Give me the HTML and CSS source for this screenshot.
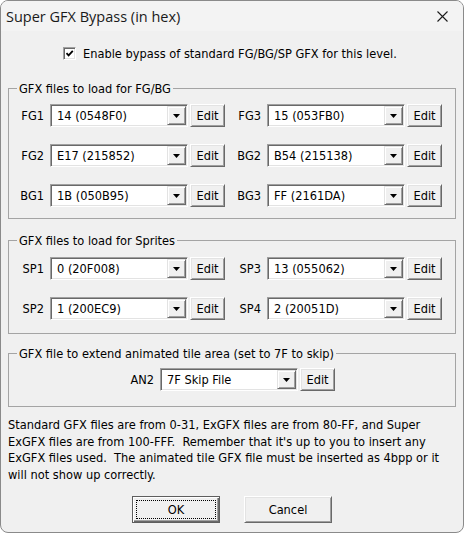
FILE: index.html
```html
<!DOCTYPE html>
<html>
<head>
<meta charset="utf-8">
<title>Super GFX Bypass (in hex)</title>
<link rel="stylesheet" href="styles.css">
</head>
<body>
<div class="window">
  <div class="titlebar">
    <span class="title">Super GFX Bypass (in hex)</span>
    <svg class="close" width="11" height="11" viewBox="0 0 11 11"><path d="M0.5 0.5L10.5 10.5M10.5 0.5L0.5 10.5" stroke="#1b1b1b" stroke-width="1.1" fill="none"/></svg>
  </div>
  <div class="content">
    <label class="enable">
      <span class="checkbox"><svg width="9" height="9" viewBox="0 0 9 9"><path d="M1.5 4.2L3.6 6.4L7.8 1.8" stroke="#000" stroke-width="1.8" fill="none"/></svg></span>
      <span>Enable bypass of standard FG/BG/SP GFX for this level.</span>
    </label>

    <fieldset class="group g1">
      <legend>GFX files to load for FG/BG</legend>
      <div class="grid">
        <div class="field"><span class="lbl">FG1</span><div class="combo"><span class="value">14 (0548F0)</span><span class="drop"><svg width="7" height="4" viewBox="0 0 7 4"><path d="M0 0H7L3.5 4Z" fill="#000"/></svg></span></div><button class="edit">Edit</button></div>
        <div class="field"><span class="lbl">FG3</span><div class="combo"><span class="value">15 (053FB0)</span><span class="drop"><svg width="7" height="4" viewBox="0 0 7 4"><path d="M0 0H7L3.5 4Z" fill="#000"/></svg></span></div><button class="edit">Edit</button></div>
        <div class="field"><span class="lbl">FG2</span><div class="combo"><span class="value">E17 (215852)</span><span class="drop"><svg width="7" height="4" viewBox="0 0 7 4"><path d="M0 0H7L3.5 4Z" fill="#000"/></svg></span></div><button class="edit">Edit</button></div>
        <div class="field"><span class="lbl">BG2</span><div class="combo"><span class="value">B54 (215138)</span><span class="drop"><svg width="7" height="4" viewBox="0 0 7 4"><path d="M0 0H7L3.5 4Z" fill="#000"/></svg></span></div><button class="edit">Edit</button></div>
        <div class="field"><span class="lbl">BG1</span><div class="combo"><span class="value">1B (050B95)</span><span class="drop"><svg width="7" height="4" viewBox="0 0 7 4"><path d="M0 0H7L3.5 4Z" fill="#000"/></svg></span></div><button class="edit">Edit</button></div>
        <div class="field"><span class="lbl">BG3</span><div class="combo"><span class="value">FF (2161DA)</span><span class="drop"><svg width="7" height="4" viewBox="0 0 7 4"><path d="M0 0H7L3.5 4Z" fill="#000"/></svg></span></div><button class="edit">Edit</button></div>
      </div>
    </fieldset>

    <fieldset class="group g2">
      <legend>GFX files to load for Sprites</legend>
      <div class="grid">
        <div class="field"><span class="lbl">SP1</span><div class="combo"><span class="value">0 (20F008)</span><span class="drop"><svg width="7" height="4" viewBox="0 0 7 4"><path d="M0 0H7L3.5 4Z" fill="#000"/></svg></span></div><button class="edit">Edit</button></div>
        <div class="field"><span class="lbl">SP3</span><div class="combo"><span class="value">13 (055062)</span><span class="drop"><svg width="7" height="4" viewBox="0 0 7 4"><path d="M0 0H7L3.5 4Z" fill="#000"/></svg></span></div><button class="edit">Edit</button></div>
        <div class="field"><span class="lbl">SP2</span><div class="combo"><span class="value">1 (200EC9)</span><span class="drop"><svg width="7" height="4" viewBox="0 0 7 4"><path d="M0 0H7L3.5 4Z" fill="#000"/></svg></span></div><button class="edit">Edit</button></div>
        <div class="field"><span class="lbl">SP4</span><div class="combo"><span class="value">2 (20051D)</span><span class="drop"><svg width="7" height="4" viewBox="0 0 7 4"><path d="M0 0H7L3.5 4Z" fill="#000"/></svg></span></div><button class="edit">Edit</button></div>
      </div>
    </fieldset>

    <fieldset class="group g3">
      <legend>GFX file to extend animated tile area (set to 7F to skip)</legend>
      <div class="single">
        <div class="field"><span class="lbl">AN2</span><div class="combo"><span class="value">7F Skip File</span><span class="drop"><svg width="7" height="4" viewBox="0 0 7 4"><path d="M0 0H7L3.5 4Z" fill="#000"/></svg></span></div><button class="edit">Edit</button></div>
      </div>
    </fieldset>

    <p class="note">Standard GFX files are from 0-31, ExGFX files are from 80-FF, and Super<br>ExGFX files are from 100-FFF.&nbsp; Remember that it's up to you to insert any<br>ExGFX files used.&nbsp; The animated tile GFX file must be inserted as 4bpp or it<br>will not show up correctly.</p>

    <div class="buttons">
      <button class="btn default"><span class="focus">OK</span></button>
      <button class="btn">Cancel</button>
    </div>
  </div>
</div>
</body>
</html>
```

FILE: styles.css
```css
html, body {
  margin: 0;
  background: #ffffff;
}

body {
  font-family: "DejaVu Sans Condensed", "DejaVu Sans", sans-serif;
  font-size: 12.7px;
  color: #000;
}

.window {
  width: 464px;
  height: 533px;
  box-sizing: border-box;
  border: 1px solid #8a8a8a;
  border-radius: 8px;
  background: #f0f0f0;
  overflow: hidden;
  display: flex;
  flex-direction: column;
}

.titlebar {
  flex: none;
  height: 30px;
  background: #f3f3f3;
  display: flex;
  align-items: center;
  justify-content: space-between;
  padding: 0 15px 0 5px;
}

.title {
  font-family: "Open Sans", "Noto Sans", sans-serif;
  font-size: 14.5px;
  color: #1a1a1a;
}

.close {
  display: block;
}

.content {
  flex: 1;
}

.enable {
  display: flex;
  align-items: center;
  height: 15px;
  margin: 15px 0 0 62px;
  gap: 7px;
  white-space: nowrap;
}

.checkbox {
  width: 13px;
  height: 13px;
  box-sizing: border-box;
  background: #fff;
  border: 1px solid;
  border-color: #a0a0a0 #ffffff #ffffff #a0a0a0;
  box-shadow: inset 1px 1px #696969, inset -1px -1px #e3e3e3;
  display: flex;
  align-items: center;
  justify-content: center;
}

.checkbox svg {
  display: block;
}

.group {
  margin: 0 7px;
  padding: 0;
  border: 1px solid #a4a4a4;
  min-width: 0;
}

.group legend {
  margin-left: 8px;
  padding: 0 2px;
  line-height: 15px;
  white-space: nowrap;
}

.g1 {
  margin-top: 20px;
  padding-top: 8px;
  padding-bottom: 11px;
}

.g2 {
  margin-top: 14px;
  padding-top: 9px;
  padding-bottom: 13px;
}

.g3 {
  margin-top: 12px;
  padding-top: 7px;
  padding-bottom: 15px;
}

.grid {
  display: grid;
  grid-template-columns: 211px 211px;
  column-gap: 6px;
  row-gap: 17px;
  padding-left: 5px;
}

.single {
  padding-left: 115px;
}

.field {
  display: flex;
  align-items: center;
}

.lbl {
  width: 30px;
  margin-right: 6px;
  text-align: right;
  white-space: nowrap;
}

.combo {
  width: 138px;
  height: 23px;
  box-sizing: border-box;
  background: #fff;
  border: 1px solid;
  border-color: #a0a0a0 #ffffff #ffffff #a0a0a0;
  box-shadow: inset 1px 1px #696969, inset -1px -1px #e3e3e3;
  padding: 1px;
  display: flex;
}

.value {
  flex: 1;
  padding-left: 5px;
  line-height: 19px;
  white-space: nowrap;
  overflow: hidden;
}

.drop {
  width: 19px;
  box-sizing: border-box;
  background: #f0f0f0;
  border: 1px solid;
  border-color: #e3e3e3 #696969 #696969 #e3e3e3;
  box-shadow: inset 1px 1px #ffffff, inset -1px -1px #a0a0a0;
  display: flex;
  align-items: center;
  justify-content: center;
}

.drop svg {
  display: block;
}

button {
  font-family: inherit;
  font-size: inherit;
  color: #000;
  margin: 0;
  padding: 0;
}

.edit {
  width: 35px;
  height: 23px;
  margin-left: 2px;
  box-sizing: border-box;
  background: #f0f0f0;
  border: 1px solid;
  border-color: #ffffff #696969 #696969 #ffffff;
  box-shadow: inset 1px 1px #e3e3e3, inset -1px -1px #a0a0a0;
}

.note {
  margin: 10px 0 0 7px;
  line-height: 16.5px;
  white-space: nowrap;
}

.buttons {
  margin-top: 13px;
  display: flex;
  gap: 24px;
  padding-left: 131px;
}

.btn {
  width: 88px;
  height: 27px;
  box-sizing: border-box;
  background: #f0f0f0;
  border: 1px solid;
  border-color: #ffffff #696969 #696969 #ffffff;
  box-shadow: inset 1px 1px #e3e3e3, inset -1px -1px #a0a0a0;
}

.btn.default {
  border: 1px solid #5e5e5e;
  box-shadow: inset 1px 1px #ffffff, inset -1px -1px #696969, inset -2px -2px #a0a0a0;
  padding: 3px;
  display: flex;
}

.focus {
  flex: 1;
  border: 1px dotted #000;
  display: flex;
  align-items: center;
  justify-content: center;
}
```
